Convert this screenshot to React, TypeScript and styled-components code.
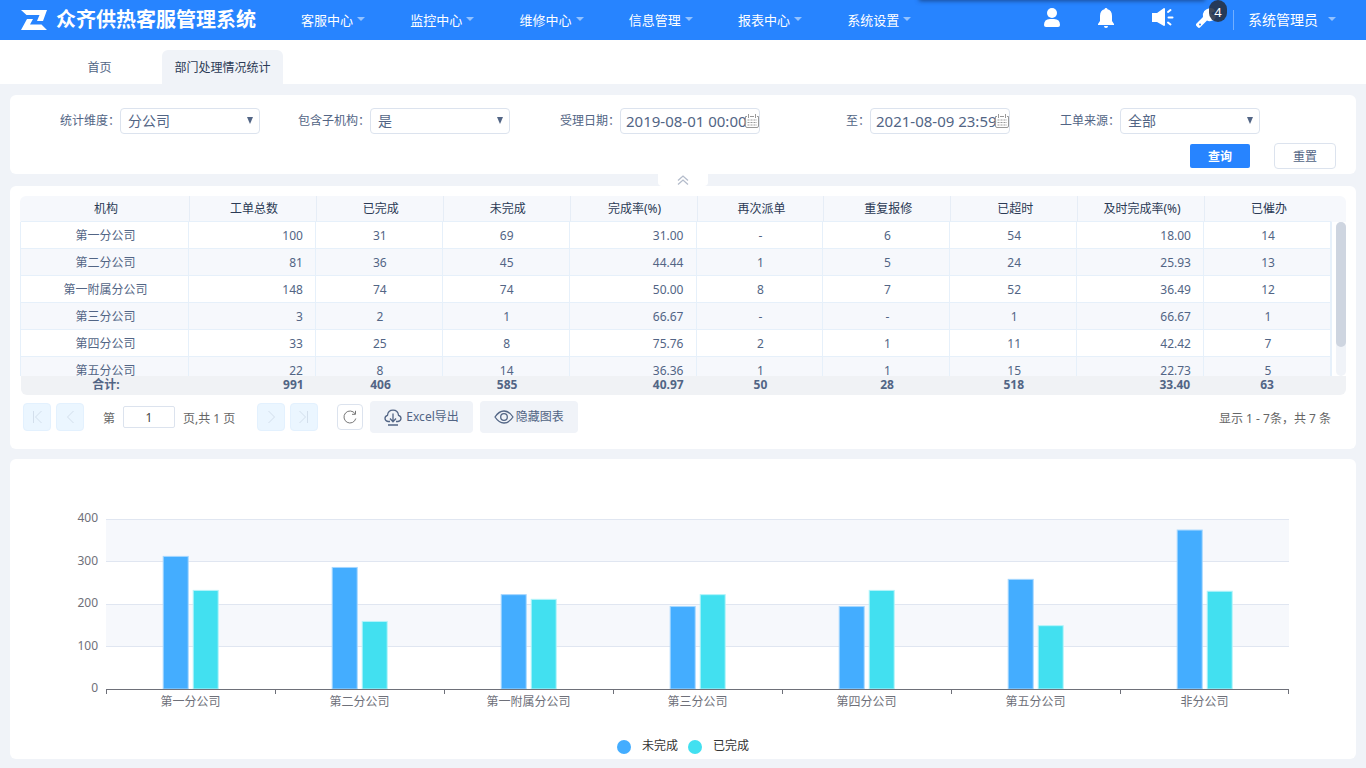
import React from "react";
import styled, { createGlobalStyle, css } from "styled-components";

const GlobalStyle = createGlobalStyle`
  *, *::before, *::after { box-sizing: border-box; }
  body {
    margin: 0;
    background: #f0f3f8;
    color: #526585;
    font: 12px/16px "Noto Sans", "Noto Sans CJK SC", sans-serif;
  }
  button, input, select { font: inherit; color: inherit; }
  button { cursor: pointer; }
`;

/* ---------- header ---------- */

const Header = styled.header`
  position: relative;
  display: flex;
  align-items: center;
  height: 40px;
  padding: 0 30px 0 21px;
  background: #2784ff;
  color: #fff;
  overflow: hidden;
`;

const TopShade = styled.div`
  position: absolute;
  top: -4px;
  right: 162px;
  width: 284px;
  height: 4px;
  box-shadow: 0 0 4px 1px rgba(20, 50, 100, 0.7);
`;

const Brand = styled.h1`
  display: flex;
  flex: none;
  align-items: center;
  gap: 9px;
  width: 280px;
  margin: 0;
  font-size: 20px;
  line-height: 28px;
  font-weight: 700;
  white-space: nowrap;
`;

const Nav = styled.nav`
  display: flex;
  flex: 1;
`;

const Caret = styled.span`
  flex: none;
  width: 0;
  height: 0;
  margin-bottom: 3px;
  border: 4px solid transparent;
  border-top-color: rgba(255, 255, 255, 0.5);
  border-bottom: 0;
`;

const NavItem = styled.a`
  display: flex;
  flex: 0 0 8vw;
  align-items: center;
  gap: 4px;
  color: #fff;
  font-size: 13px;
  line-height: 20px;
  text-decoration: none;
  white-space: nowrap;
`;

const Tools = styled.div`
  display: flex;
  align-items: center;
  gap: 30px;
  margin-right: 14px;
`;

const ToolButton = styled.button`
  position: relative;
  display: flex;
  width: 24px;
  height: 24px;
  margin-bottom: 4px;
  padding: 0;
  border: 0;
  background: none;
  color: #fff;

  &:nth-child(3) { margin-left: 2px; }
  &:last-child { margin-left: -9px; }
`;

const Badge = styled.span`
  position: absolute;
  top: -6px;
  left: 14px;
  width: 18px;
  height: 22px;
  border-radius: 9px;
  background: rgba(38, 48, 66, 0.88);
  font-size: 13px;
  line-height: 24px;
  text-align: center;
`;

const UserMenu = styled.a`
  display: flex;
  align-items: center;
  gap: 10px;
  height: 20px;
  padding-left: 14px;
  border-left: 1px solid rgba(255, 255, 255, 0.35);
  color: #fff;
  font-size: 14px;
  text-decoration: none;
  white-space: nowrap;
`;

/* ---------- tabs ---------- */

const Tabs = styled.nav`
  display: flex;
  align-items: flex-end;
  height: 44px;
  padding-left: 39px;
  background: #fff;
`;

const Tab = styled.a<{ $active?: boolean }>`
  min-width: 121px;
  height: 34px;
  margin-right: 2px;
  padding: 0 12px;
  border-radius: 6px 6px 0 0;
  line-height: 36px;
  text-align: center;
  text-decoration: none;
  color: ${(p) => (p.$active ? "#2b3a55" : "#526585")};
  background: ${(p) => (p.$active ? "#f0f3f8" : "transparent")};
`;

/* ---------- panels ---------- */

const Main = styled.main`
  padding: 11px 10px 9px;
`;

const Panel = styled.section`
  border-radius: 6px;
  background: #fff;
`;

const FilterPanel = styled(Panel)`
  padding: 13px 20px 5px 0;
`;

const Fields = styled.div`
  display: flex;
  flex-wrap: wrap;
  row-gap: 9px;
`;

const Field = styled.div`
  display: flex;
  flex: 0 0 250px;
  align-items: center;
`;

const FieldLabel = styled.label`
  width: 110px;
  padding-bottom: 1px;
  text-align: right;
  white-space: nowrap;
`;

const ControlBox = styled.div`
  position: relative;
  width: 140px;
`;

const controlStyle = css`
  display: block;
  width: 100%;
  height: 26px;
  border: 1px solid #dce3ee;
  border-radius: 4px;
  background: #fff;
  outline: none;
`;

const Select = styled.select`
  ${controlStyle}
  padding: 0 20px 0 7px;
  appearance: none;
  font-size: 14px;
`;

const DateInput = styled.input`
  ${controlStyle}
  padding: 0 2px 0 5px;
  font-size: 15px;
`;

const SelectArrow = styled.svg`
  position: absolute;
  top: 9px;
  right: 7px;
  pointer-events: none;
`;

const CalendarIcon = styled.svg`
  position: absolute;
  top: 6px;
  right: 1px;
  pointer-events: none;
`;

const Actions = styled.div`
  display: flex;
  align-items: center;
  justify-content: flex-end;
  gap: 24px;
  margin-top: 9px;
`;

const QueryButton = styled.button`
  width: 60px;
  height: 24px;
  padding: 1px 0 0;
  border: 0;
  border-radius: 2px;
  background: #2784ff;
  color: #fff;
  font-weight: 700;
`;

const ResetButton = styled.button`
  width: 62px;
  height: 26px;
  padding: 1px 0 0;
  border: 1px solid #dce3ee;
  border-radius: 4px;
  background: #fff;
`;

const CollapseButton = styled.button`
  display: flex;
  align-items: center;
  justify-content: center;
  width: 50px;
  height: 12px;
  margin: 0 auto;
  padding: 0;
  border: 0;
  border-radius: 0 0 4px 4px;
  background: #fff;
  color: #b4bccb;
`;

/* ---------- table ---------- */

const TablePanel = styled(Panel)`
  padding: 10px 10px 16px;
`;

const HeadWrap = styled.div`
  padding: 0 14px 0 1px;
  border-radius: 6px 6px 0 0;
  background: #f6f8fc;
`;

const FootWrap = styled.div`
  margin-left: 1px;
  padding-right: 16px;
  border-radius: 0 0 6px 6px;
  background: #f0f2f5;
`;

const BodyWrap = styled.div`
  display: flex;
  gap: 4px;
`;

const BodyScroll = styled.div`
  flex: 1;
  height: 154px;
  overflow-y: auto;
  scrollbar-width: none;
  border-right: 1px solid #e6f0fa;
`;

const Track = styled.div`
  width: 10px;
  height: 154px;
  border-radius: 5px;
  background: #f0f3f8;
`;

const Thumb = styled.div`
  height: 125px;
  border-radius: 5px;
  background: #ced5e0;
`;

const Grid = styled.table`
  width: 100%;
  border-spacing: 0;
  table-layout: fixed;
`;

const NameCol = styled.col`
  width: 169px;
`;

const HeadCell = styled.th`
  height: 26px;
  padding: 0 0 0 2px;
  border-right: 1px solid #e6edf6;
  border-bottom: 1px solid #e6f0fa;
  color: #2b3a55;
  font-weight: 400;

  &:last-child { border-right-color: transparent; }
`;

const BodyRow = styled.tr`
  &:nth-child(even) { background: #f6f8fc; }
`;

const Cell = styled.td<{ $right?: boolean }>`
  height: 27px;
  padding: ${(p) => (p.$right ? "2px 12px 0 0" : "2px 0 0 2px")};
  border-right: 1px solid #e6f0fa;
  border-bottom: 1px solid #e6f0fa;
  text-align: ${(p) => (p.$right ? "right" : "center")};

  &:first-child { border-left: 1px solid #e6f0fa; }
`;

const TotalCell = styled.td<{ $right?: boolean }>`
  height: 19px;
  padding: ${(p) => (p.$right ? "0 13px 2px 0" : "0 0 2px 1px")};
  font-weight: 700;
  text-align: ${(p) => (p.$right ? "right" : "center")};
`;

/* ---------- pager ---------- */

const Pager = styled.div`
  display: flex;
  align-items: center;
  height: 32px;
  margin-top: 6px;
  padding: 0 15px 0 3px;
  color: #666;
`;

const PageButtons = styled.div`
  display: flex;
  gap: 5px;
`;

const PageButton = styled.button`
  display: flex;
  align-items: center;
  justify-content: center;
  width: 28px;
  height: 28px;
  padding: 0;
  border: 1px solid #e3f1fe;
  border-radius: 4px;
  background: #ebf6ff;
  color: #d3dfec;
`;

const PageLabel = styled.label`
  display: flex;
  align-items: center;
  gap: 8px;
  margin: 3px 22px 0 19px;
`;

const PageInput = styled.input`
  width: 52px;
  height: 22px;
  margin-bottom: 3px;
  padding: 0;
  border: 1px solid #dce3ee;
  border-radius: 2px;
  color: #444;
  text-align: center;
`;

const RefreshButton = styled.button`
  display: flex;
  align-items: center;
  justify-content: center;
  width: 26px;
  height: 26px;
  margin: 0 7px 0 19px;
  padding: 0;
  border: 1px solid #dce3ee;
  border-radius: 4px;
  background: #fff;
  color: #777;
`;

const ToolbarButton = styled.button<{ $gap: number }>`
  display: flex;
  align-items: center;
  gap: ${(p) => p.$gap}px;
  height: 32px;
  margin-right: 7px;
  padding: 0 14px;
  border: 0;
  border-radius: 4px;
  background: #f0f3f8;
  color: #526585;
  line-height: 18px;
  white-space: nowrap;
`;

const Summary = styled.span`
  margin: 4px 0 0 auto;
`;

/* ---------- chart ---------- */

const ChartPanel = styled(Panel)`
  margin-top: 10px;
  padding: 37px 0 5px;
`;

const Chart = styled.svg`
  display: block;
  width: 100%;
`;

const AxisText = styled.text`
  fill: #6e7079;
  font-size: 12px;
`;

const Legend = styled.ul`
  display: flex;
  justify-content: center;
  gap: 10px;
  margin: 20px 0 0;
  padding: 0;
  list-style: none;
`;

const LegendItem = styled.li<{ $color: string }>`
  display: flex;
  align-items: center;
  gap: 11px;
  color: #333;

  &::before {
    content: "";
    width: 14px;
    height: 14px;
    margin-top: 2px;
    border-radius: 50%;
    background: ${(p) => p.$color};
  }
`;

/* ---------- data ---------- */

const menus = ["客服中心", "监控中心", "维修中心", "信息管理", "报表中心", "系统设置"];

const columns = [
  "机构", "工单总数", "已完成", "未完成", "完成率(%)",
  "再次派单", "重复报修", "已超时", "及时完成率(%)", "已催办",
];

const rows = [
  ["第一分公司", "100", "31", "69", "31.00", "-", "6", "54", "18.00", "14"],
  ["第二分公司", "81", "36", "45", "44.44", "1", "5", "24", "25.93", "13"],
  ["第一附属分公司", "148", "74", "74", "50.00", "8", "7", "52", "36.49", "12"],
  ["第三分公司", "3", "2", "1", "66.67", "-", "-", "1", "66.67", "1"],
  ["第四分公司", "33", "25", "8", "75.76", "2", "1", "11", "42.42", "7"],
  ["第五分公司", "22", "8", "14", "36.36", "1", "1", "15", "22.73", "5"],
];

const totals = ["合计:", "991", "406", "585", "40.97", "50", "28", "518", "33.40", "63"];

const isRight = (i: number) => i === 1 || i === 4 || i === 8;

const series = [
  { name: "第一分公司", open: 312, done: 232 },
  { name: "第二分公司", open: 286, done: 159 },
  { name: "第一附属分公司", open: 222, done: 211 },
  { name: "第三分公司", open: 194, done: 222 },
  { name: "第四分公司", open: 194, done: 232 },
  { name: "第五分公司", open: 258, done: 149 },
  { name: "非分公司", open: 374, done: 230 },
];

const Cols = () => (
  <colgroup>
    <NameCol />
    {columns.slice(1).map((c) => <col key={c} />)}
  </colgroup>
);

const ComboField = ({ id, label, value }: { id: string; label: string; value: string }) => (
  <Field>
    <FieldLabel htmlFor={id}>{label}：</FieldLabel>
    <ControlBox>
      <Select id={id} defaultValue={value}>
        <option>{value}</option>
      </Select>
      <SelectArrow width="6" height="7" viewBox="0 0 6 7" aria-hidden="true">
        <path d="M0 0H6L3 7Z" fill="#526585" />
      </SelectArrow>
    </ControlBox>
  </Field>
);

const DateField = ({ id, label, value }: { id: string; label: string; value: string }) => (
  <Field>
    <FieldLabel htmlFor={id}>{label}：</FieldLabel>
    <ControlBox>
      <DateInput id={id} defaultValue={value} />
      <CalendarIcon width="14" height="14" viewBox="0 0 14 14" fill="none" stroke="#999" aria-hidden="true">
        <path d="M.5 2.5V12Q.5 13.5 2 13.5H12Q13.5 13.5 13.5 12V2.5M.5 2.5H2M5 2.5H9M12 2.5H13.5M3.5 0V4M10.5 0V4" />
        <path d="M2.5 6H12M2.5 8.5H12M2.5 11H12" strokeDasharray="2 1" />
      </CalendarIcon>
    </ControlBox>
  </Field>
);

const plot = { left: 96, right: 1279, top: 23, bottom: 193, band: 169 };
const yOf = (v: number) => plot.bottom - (v / 400) * 170;

const BarChart = () => (
  <Chart viewBox="0 0 1346 222" role="img" aria-label="部门处理情况统计">
    {[400, 200].map((v) => (
      <rect key={v} x={plot.left} y={yOf(v)} width={1183} height={42.5} fill="#f6f8fc" />
    ))}
    {[400, 300, 200, 100].map((v) => (
      <line
        key={v}
        x1={plot.left}
        x2={plot.right}
        y1={Math.floor(yOf(v)) + 0.5}
        y2={Math.floor(yOf(v)) + 0.5}
        stroke="#e0e6f1"
      />
    ))}
    {[400, 300, 200, 100, 0].map((v) => (
      <AxisText key={v} x={88} y={yOf(v) + 3} textAnchor="end">{v}</AxisText>
    ))}
    {series.map((s, i) => {
      const x = plot.left + i * plot.band;
      return (
        <g key={s.name}>
          <rect x={x + 57.2} y={yOf(s.open)} width={25} height={plot.bottom - yOf(s.open)} fill="#44adff" stroke="#a5d7ff" />
          <rect x={x + 87.2} y={yOf(s.done)} width={25} height={plot.bottom - yOf(s.done)} fill="#42e0f0" stroke="#b4f4fa" />
          <AxisText x={x + 84.5} y={210} textAnchor="middle">{s.name}</AxisText>
        </g>
      );
    })}
    <path
      d={`M96 193.5H1279${Array.from({ length: 8 }, (_, i) => `M${Math.min(96.5 + i * 169, 1278.5)} 193V198`).join("")}`}
      stroke="#6e7079"
      fill="none"
    />
  </Chart>
);

const PagerIcon = ({ d }: { d: string }) => (
  <svg width="14" height="14" viewBox="0 0 14 14" fill="none" stroke="currentColor" aria-hidden="true">
    <path d={d} />
  </svg>
);

export default function App() {
  return (
    <>
      <GlobalStyle />
      <Header>
        <TopShade />
        <Brand>
          <svg width="26" height="20" viewBox="0 0 26 20" fill="#fff" aria-hidden="true">
            <path d="M0 0H26L22 11H16L18.500 5H5.500Z" />
            <path d="M6 9H12L9 14.500H20.500L26 20H0Z" />
          </svg>
          众齐供热客服管理系统
        </Brand>
        <Nav>
          {menus.map((m) => (
            <NavItem key={m} href="#">{m}<Caret /></NavItem>
          ))}
        </Nav>
        <Tools>
          <ToolButton aria-label="用户">
            <svg width="24" height="24" viewBox="0 0 24 24" fill="currentColor">
              <circle cx="12" cy="7" r="5" />
              <path d="M4 19Q4 13 10 13H14Q20 13 20 19Q20 21 18 21H6Q4 21 4 19Z" />
            </svg>
          </ToolButton>
          <ToolButton aria-label="通知">
            <svg width="24" height="24" viewBox="0 0 24 24" fill="currentColor">
              <path d="M12 2Q13.300 2 13.500 3.300Q18 4.500 18 10V15L20 18V19H4V18L6 15V10Q6 4.500 10.500 3.300Q10.700 2 12 2Z" />
              <path d="M10 20H14Q14 22 12 22Q10 22 10 20Z" />
            </svg>
          </ToolButton>
          <ToolButton aria-label="声音">
            <svg width="24" height="24" viewBox="0 0 24 24" fill="currentColor">
              <path d="M2 7H7L14 2Q15 2 15 3V19Q15 20 14 20L7 16H2Q2 16 2 15Z" />
              <path d="M18 6L20.500 4M18.500 11.500H22.500M18 16.500L20.500 18.500" stroke="currentColor" strokeWidth="2" strokeLinecap="round" />
            </svg>
          </ToolButton>
          <ToolButton aria-label="维修">
            <svg width="24" height="24" viewBox="0 0 24 24" fill="currentColor">
              <path d="M15 2Q19 2 20 5L16 7L18 9L21 8Q21 14 16 15Q13.500 15.500 12 14.500L5 21.500Q4 22.500 2.500 21Q0 19 1.500 17.500L8 11Q7 3.500 15 2Z" />
              <circle cx="5" cy="18.500" r="1" fill="#2784ff" />
            </svg>
            <Badge>4</Badge>
          </ToolButton>
        </Tools>
        <UserMenu href="#">系统管理员<Caret /></UserMenu>
      </Header>

      <Tabs>
        <Tab href="#">首页</Tab>
        <Tab href="#" $active>部门处理情况统计</Tab>
      </Tabs>

      <Main>
        <FilterPanel as="form" onSubmit={(e: React.FormEvent) => e.preventDefault()}>
          <Fields>
            <ComboField id="dimension" label="统计维度" value="分公司" />
            <ComboField id="children" label="包含子机构" value="是" />
            <DateField id="from" label="受理日期" value="2019-08-01 00:00" />
            <DateField id="to" label="至" value="2021-08-09 23:59" />
            <ComboField id="source" label="工单来源" value="全部" />
          </Fields>
          <Actions>
            <QueryButton type="submit">查询</QueryButton>
            <ResetButton type="reset">重置</ResetButton>
          </Actions>
        </FilterPanel>

        <CollapseButton aria-label="收起">
          <svg width="12" height="10" viewBox="0 0 12 10" fill="none" stroke="currentColor" strokeWidth="1.300">
            <path d="M1 5.500L6 1L11 5.500M1 9.500L6 5L11 9.500" />
          </svg>
        </CollapseButton>

        <TablePanel>
          <HeadWrap>
            <Grid>
              <Cols />
              <thead>
                <tr>{columns.map((c) => <HeadCell key={c} scope="col">{c}</HeadCell>)}</tr>
              </thead>
            </Grid>
          </HeadWrap>
          <BodyWrap>
            <BodyScroll>
              <Grid>
                <Cols />
                <tbody>
                  {rows.map((r) => (
                    <BodyRow key={r[0]}>
                      {r.map((v, i) => <Cell key={i} $right={isRight(i)}>{v}</Cell>)}
                    </BodyRow>
                  ))}
                </tbody>
              </Grid>
            </BodyScroll>
            <Track><Thumb /></Track>
          </BodyWrap>
          <FootWrap>
            <Grid>
              <Cols />
              <tbody>
                <tr>{totals.map((v, i) => <TotalCell key={i} $right={isRight(i)}>{v}</TotalCell>)}</tr>
              </tbody>
            </Grid>
          </FootWrap>

          <Pager>
            <PageButtons>
              <PageButton aria-label="第一页"><PagerIcon d="M3.500 1V13M11.500 1L5.500 7L11.500 13" /></PageButton>
              <PageButton aria-label="上一页"><PagerIcon d="M10.500 1L4.500 7L10.500 13" /></PageButton>
            </PageButtons>
            <PageLabel>
              第
              <PageInput defaultValue="1" />
              页,共 1 页
            </PageLabel>
            <PageButtons>
              <PageButton aria-label="下一页"><PagerIcon d="M4.500 1L10.500 7L4.500 13" /></PageButton>
              <PageButton aria-label="最后一页"><PagerIcon d="M10.500 1V13M2.500 1L8.500 7L2.500 13" /></PageButton>
            </PageButtons>
            <RefreshButton aria-label="刷新">
              <svg width="14" height="14" viewBox="0 0 14 14" fill="none" stroke="currentColor">
                <path d="M12.800 8.500A6 6 0 1 1 12 3.700M12.500 .8V4.300H9" />
              </svg>
            </RefreshButton>
            <ToolbarButton $gap={4}>
              <svg width="18" height="17" viewBox="0 0 18 17" fill="none" stroke="currentColor" strokeWidth="1.300" aria-hidden="true">
                <path d="M6 12.500H4Q1 12 1 9.300Q1 7 3.500 6.300Q4 1.200 9 1.200Q14 1.200 14.500 6.300Q17 7 17 9.300Q17 12 14 12.500H12" />
                <path d="M9 4.500V12.500M6 9.500L9 12.700L12 9.500M4 16H14" />
              </svg>
              Excel导出
            </ToolbarButton>
            <ToolbarButton $gap={2}>
              <svg width="20" height="14" viewBox="0 0 20 14" fill="none" stroke="currentColor" strokeWidth="1.300" aria-hidden="true">
                <path d="M1 7Q5 1 10 1Q15 1 19 7Q15 13 10 13Q5 13 1 7Z" />
                <circle cx="10" cy="7" r="3.300" />
              </svg>
              隐藏图表
            </ToolbarButton>
            <Summary>显示 1 - 7条，共 7 条</Summary>
          </Pager>
        </TablePanel>

        <ChartPanel>
          <BarChart />
          <Legend>
            <LegendItem $color="#44adff">未完成</LegendItem>
            <LegendItem $color="#42e0f0">已完成</LegendItem>
          </Legend>
        </ChartPanel>
      </Main>
    </>
  );
}
